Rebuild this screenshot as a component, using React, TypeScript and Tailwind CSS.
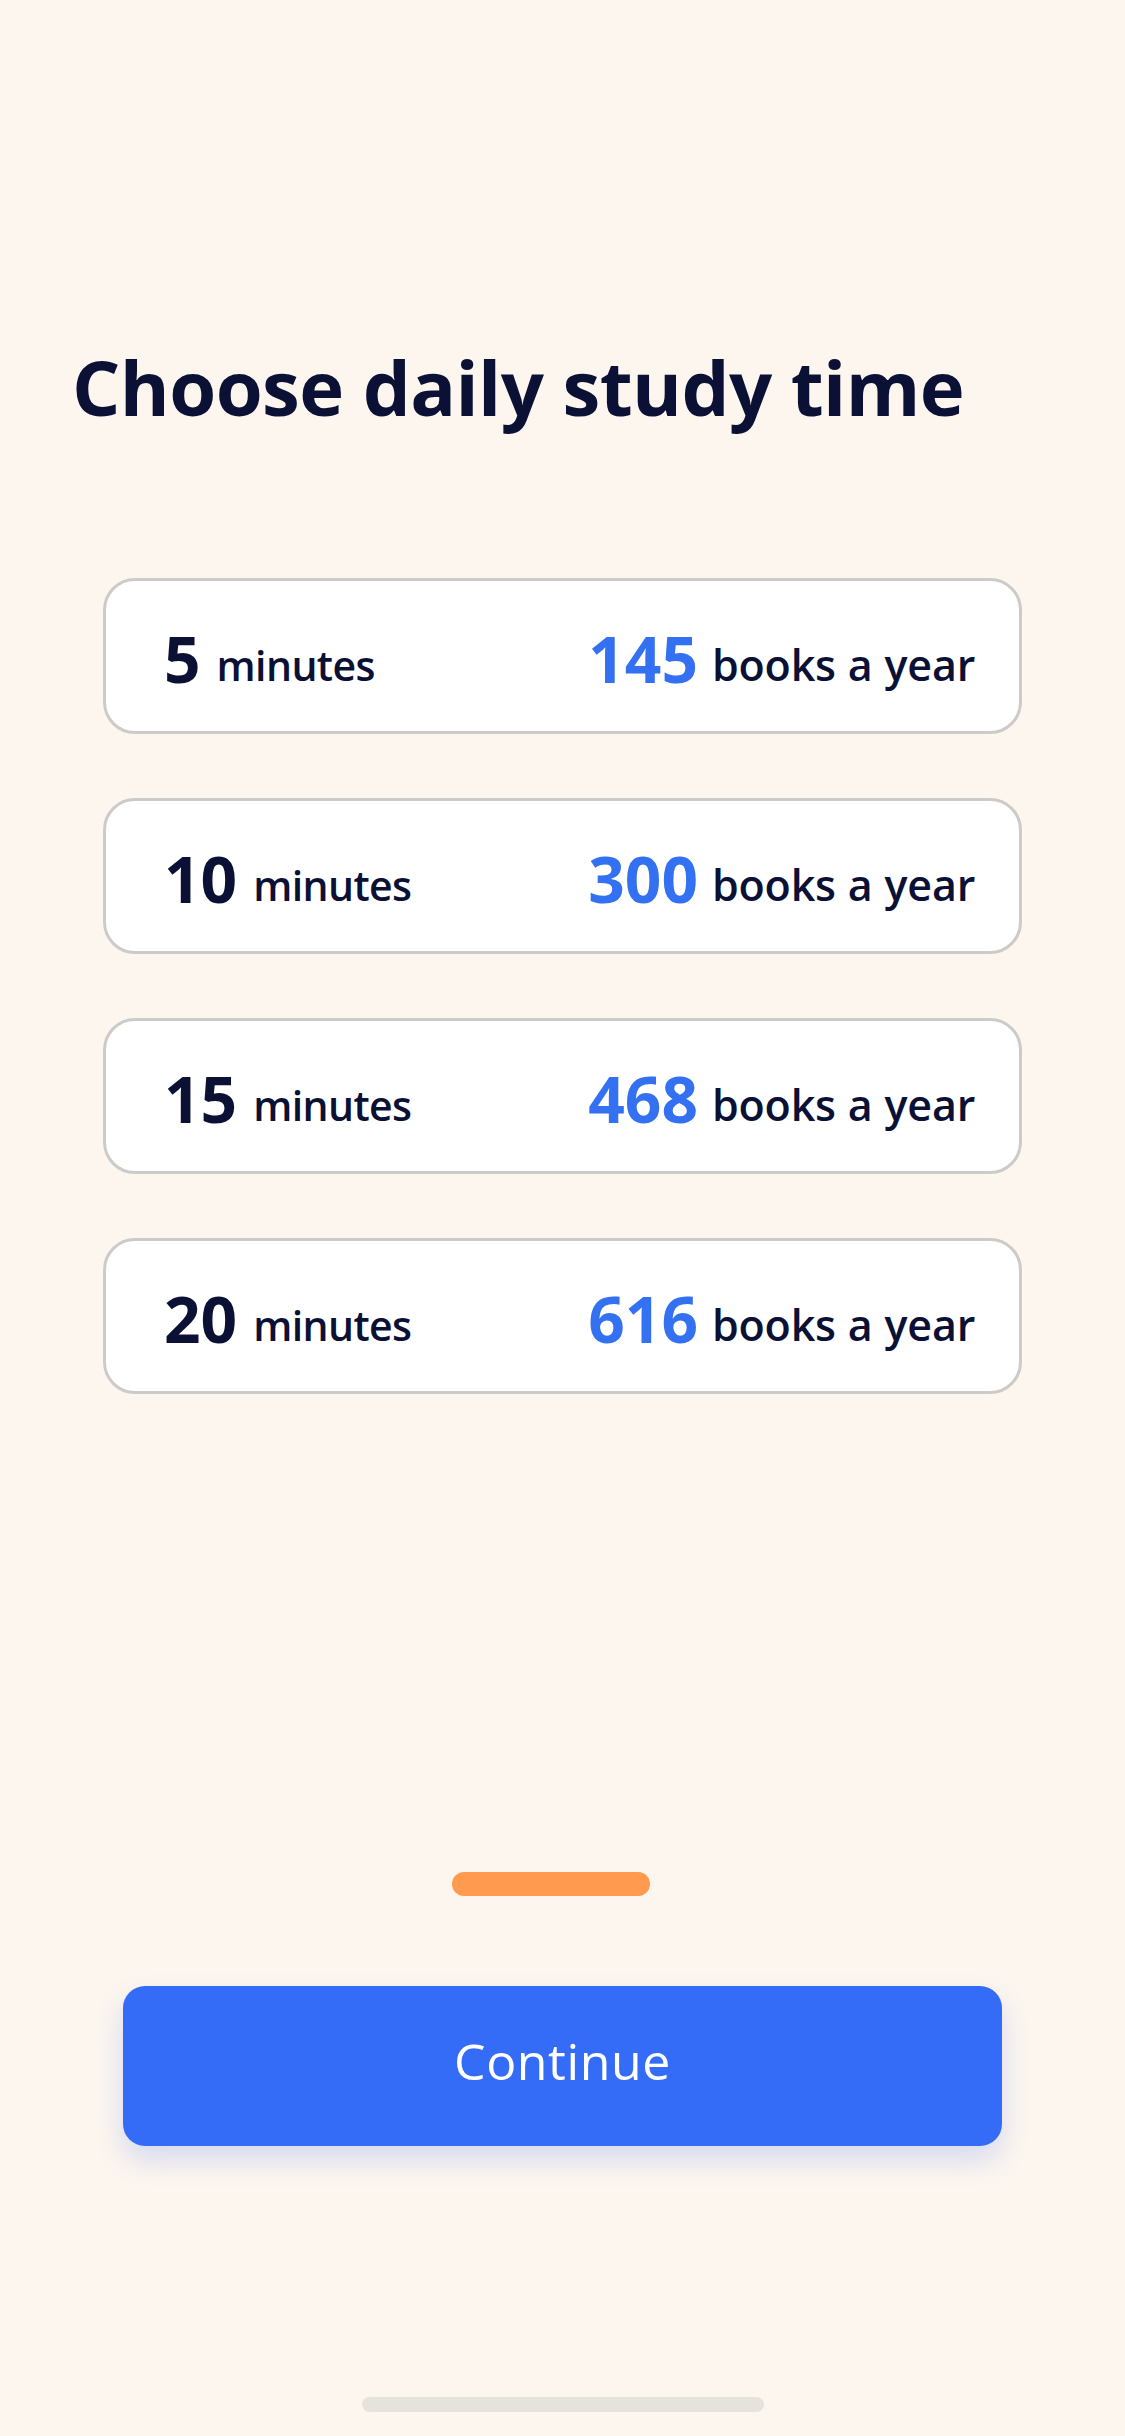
const OPTIONS = [
  { minutes: 5, books: 145 },
  { minutes: 10, books: 300 },
  { minutes: 15, books: 468 },
  { minutes: 20, books: 616 },
];

const font = { fontFamily: '"Open Sans", "Noto Sans", sans-serif' };

export default function App() {
  return (
    <div
      className="min-h-[2436px] w-full bg-[#FDF6EF] flex flex-col text-[#0B1035]"
      style={font}
    >
      {/* Title */}
      <h1 className="pl-[72px] pt-[341px] text-[76px] leading-[1.2] font-bold tracking-[-0.6px]">
        Choose daily study time
      </h1>

      {/* Options */}
      <div className="mt-[146px] mx-[103px] flex flex-col gap-[64px]">
        {OPTIONS.map((o) => (
          <OptionCard key={o.minutes} minutes={o.minutes} books={o.books} />
        ))}
      </div>

      {/* Progress */}
      <div className="mt-[478px] flex justify-center pr-[24px]">
        <div className="w-[198px] h-[24px] rounded-full bg-[#FF9A4E]" />
      </div>

      {/* Continue */}
      <button className="mt-[90px] mx-auto w-[879px] h-[160px] pb-[10px] rounded-[22px] bg-[#346CF8] text-white text-[50px] font-normal tracking-[0.6px] shadow-[0_14px_28px_rgba(52,108,248,0.2)]">
        Continue
      </button>

      {/* Home indicator */}
      <div className="mt-[251px] mx-auto w-[402px] h-[15px] rounded-full bg-[#E6E2DC]" />
    </div>
  );
}

function OptionCard({ minutes, books }: { minutes: number; books: number }) {
  return (
    <div className="h-[156px] rounded-[32px] border-[3px] border-[#CDCBC8] bg-white flex items-center justify-between pl-[58px] pr-[44px] pt-[6px]">
      <div className="flex items-baseline gap-[16px]">
        <span className="text-[64px] font-bold leading-none">{minutes}</span>
        <span className="text-[41px] font-semibold leading-none tracking-[-0.6px] -translate-y-[2px]">minutes</span>
      </div>
      <div className="flex items-baseline gap-[14px]">
        <span className="text-[64px] font-bold leading-none text-[#3470F2]">{books}</span>
        <span className="text-[43px] font-semibold leading-none tracking-[-0.2px] [word-spacing:1px] -translate-y-[2px]">books a year</span>
      </div>
    </div>
  );
}
